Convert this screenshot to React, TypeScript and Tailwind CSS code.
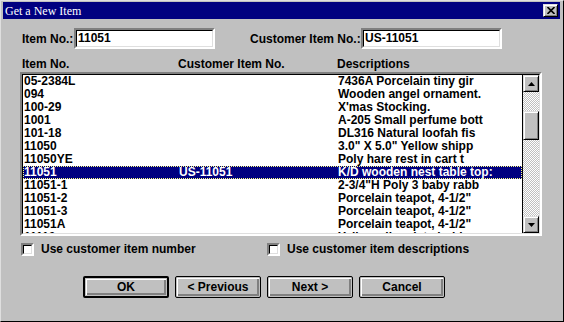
import React from 'react';

type Row = { item: string; cust?: string; desc: string };

const rows: Row[] = [
  { item: '05-2384L', desc: '7436A Porcelain tiny gir' },
  { item: '094', desc: 'Wooden angel ornament.' },
  { item: '100-29', desc: "X'mas Stocking." },
  { item: '1001', desc: 'A-205 Small perfume bott' },
  { item: '101-18', desc: 'DL316 Natural loofah fis' },
  { item: '11050', desc: '3.0" X 5.0" Yellow shipp' },
  { item: '11050YE', desc: 'Poly hare rest in cart t' },
  { item: '11051', cust: 'US-11051', desc: 'K/D wooden nest table top:' },
  { item: '11051-1', desc: '2-3/4"H Poly 3 baby rabb' },
  { item: '11051-2', desc: 'Porcelain teapot, 4-1/2"' },
  { item: '11051-3', desc: 'Porcelain teapot, 4-1/2"' },
  { item: '11051A', desc: 'Porcelain teapot, 4-1/2"' },
  { item: '11110', desc: 'Yellow slim plate holder' },
];

const sunken =
  'border-2 border-t-[#808080] border-l-[#808080] border-b-white border-r-white';
const sunkenInner =
  'border border-t-black border-l-black border-b-[#dfdfdf] border-r-[#dfdfdf]';
const raised =
  'border border-t-[#dfdfdf] border-l-[#dfdfdf] border-b-black border-r-black shadow-[inset_1px_1px_0_#fff,inset_-1px_-1px_0_#808080]';

function TextBox({ value, width }: { value: string; width: string }) {
  return (
    <div className={`${sunken} ${width} h-[21px]`}>
      <div className={`${sunkenInner} h-full bg-white pl-[1px] leading-[15px]`}>{value}</div>
    </div>
  );
}

function CheckBox({ label }: { label: string }) {
  return (
    <div className="flex items-center gap-[7px]">
      <div className={`${sunken} w-[13px] h-[13px]`}>
        <div className={`${sunkenInner} h-full bg-white`} />
      </div>
      <span>{label}</span>
    </div>
  );
}

function Button({ label, isDefault }: { label: string; isDefault?: boolean }) {
  return (
    <div
      className={`w-[86px] h-[22px] rounded-[2px] border-black bg-[#c0c0c0] p-px ${isDefault ? 'border-2' : 'border'}`}
    >
      <div className="h-full flex items-center justify-center shadow-[inset_1px_1px_0_#fff,inset_-2px_-2px_0_#808080]">
        {label}
      </div>
    </div>
  );
}

function ArrowButton({ dir }: { dir: 'up' | 'down' }) {
  return (
    <div className={`${raised} h-[17px] bg-[#c0c0c0] flex items-center justify-center`}>
      <svg width="7" height="4" viewBox="0 0 7 4">
        {dir === 'up' ? <path d="M3.5 0 L7 4 L0 4 Z" fill="#000" /> : <path d="M0 0 L7 0 L3.5 4 Z" fill="#000" />}
      </svg>
    </div>
  );
}

export default function App() {
  return (
    <div
      className="w-[564px] h-[322px] bg-[#c0c0c0] border border-t-[#dfdfdf] border-l-[#dfdfdf] border-b-black border-r-black pt-px pl-[2px] pr-[3px] text-[12px] font-bold text-black overflow-hidden"
      style={{ fontFamily: '"Liberation Sans", Arial, sans-serif' }}
    >
      {/* Title bar */}
      <div className="h-[17px] bg-[#000080] flex items-center justify-between pl-[2px] pr-[2px]">
        <span className="text-white font-normal text-[12px]" style={{ fontFamily: '"Liberation Serif", serif' }}>
          Get a New Item
        </span>
        <div className={`${raised} w-[15px] h-[13px] bg-[#c0c0c0] flex items-center justify-center`}>
          <svg width="8" height="7" viewBox="0 0 8 7">
            <path d="M0.5 0 L7.5 7 M7.5 0 L0.5 7" stroke="#000" strokeWidth="1.6" />
          </svg>
        </div>
      </div>

      <div className="pl-[17px]">
        {/* Input row */}
        <div className="flex items-center mt-[9px]">
          <span className="w-[54px] pl-[2px]">Item No.:</span>
          <TextBox value="11051" width="w-[141px]" />
          <span className="ml-[35px] w-[111px]">Customer Item No.:</span>
          <TextBox value="US-11051" width="w-[141px]" />
        </div>

        {/* Column headers */}
        <div className="flex mt-[8px] h-[14px] leading-[14px] pl-[2px]">
          <span className="w-[156px]">Item No.</span>
          <span className="w-[159px]">Customer Item No.</span>
          <span>Descriptions</span>
        </div>

        {/* List box */}
        <div className={`${sunken} mt-px w-[522px] h-[164px]`}>
          <div className="h-full flex bg-white border border-t-black border-l-black border-b-[#dfdfdf] border-r-[#dfdfdf]">
            <div className="flex-1 overflow-hidden">
              {rows.map((r) => {
                const sel = r.item === '11051';
                return (
                  <div
                    key={r.item}
                    className={`flex h-[13px] leading-[13px] pl-px whitespace-nowrap ${sel ? 'bg-[#000080] text-white outline-1 outline-dotted outline-offset-[-1px] outline-[#ffff80]' : ''}`}
                  >
                    <span className="w-[155px]">{r.item}</span>
                    <span className="w-[159px]">{r.cust ?? ''}</span>
                    <span>{r.desc}</span>
                  </div>
                );
              })}
            </div>
            <div className="w-[17px] flex flex-col bg-[repeating-conic-gradient(#c0c0c0_0_25%,#fff_0_50%)] bg-[length:2px_2px] border-l border-black">
              <ArrowButton dir="up" />
              <div className={`${raised} mt-[19px] h-[29px] bg-[#c0c0c0]`} />
              <div className="flex-1" />
              <ArrowButton dir="down" />
            </div>
          </div>
        </div>

        {/* Checkboxes */}
        <div className="flex mt-[4px] pl-px">
          <div className="w-[246px]">
            <CheckBox label="Use customer item number" />
          </div>
          <CheckBox label="Use customer item descriptions" />
        </div>

        {/* Buttons */}
        <div className="flex gap-[6px] mt-[18px] ml-[63px]">
          <Button label="OK" isDefault />
          <Button label="< Previous" />
          <Button label="Next >" />
          <Button label="Cancel" />
        </div>
      </div>
    </div>
  );
}
